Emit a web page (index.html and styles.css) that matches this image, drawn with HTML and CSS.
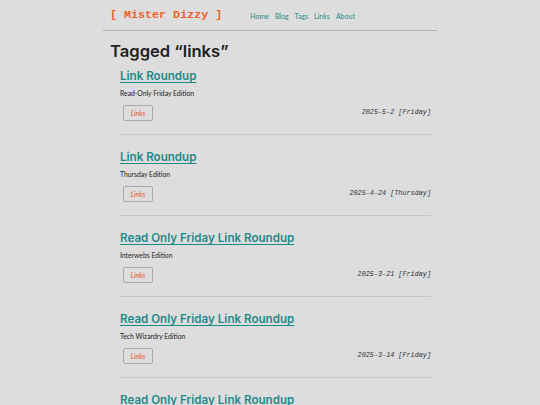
FILE: index.html
```html
<!DOCTYPE html>
<html>
<head>
<meta charset="utf-8">
<link rel="stylesheet" href="styles.css">
</head>
<body>
<div class="wrap">
  <header class="site-header">
    <a class="logo" href="#">[ Mister Dizzy ]</a>
    <nav class="nav">
      <a href="#">Home</a>
      <a href="#">Blog</a>
      <a href="#">Tags</a>
      <a href="#">Links</a>
      <a href="#">About</a>
    </nav>
  </header>
  <h1 class="page-title">Tagged “links”</h1>
  <div class="posts">
    <article class="post">
      <h2 class="post-title"><a href="#">Link Roundup</a></h2>
      <p class="post-sub">Read-Only Friday Edition</p>
      <div class="post-meta">
        <span class="tag">Links</span>
        <span class="date">2025-5-2 [Friday]</span>
      </div>
    </article>
    <article class="post">
      <h2 class="post-title"><a href="#">Link Roundup</a></h2>
      <p class="post-sub">Thursday Edition</p>
      <div class="post-meta">
        <span class="tag">Links</span>
        <span class="date">2025-4-24 [Thursday]</span>
      </div>
    </article>
    <article class="post">
      <h2 class="post-title"><a href="#">Read Only Friday Link Roundup</a></h2>
      <p class="post-sub">Interwebs Edition</p>
      <div class="post-meta">
        <span class="tag">Links</span>
        <span class="date">2025-3-21 [Friday]</span>
      </div>
    </article>
    <article class="post">
      <h2 class="post-title"><a href="#">Read Only Friday Link Roundup</a></h2>
      <p class="post-sub">Tech Wizardry Edition</p>
      <div class="post-meta">
        <span class="tag">Links</span>
        <span class="date">2025-3-14 [Friday]</span>
      </div>
    </article>
    <article class="post">
      <h2 class="post-title"><a href="#">Read Only Friday Link Roundup</a></h2>
      <p class="post-sub">Weekend Edition</p>
      <div class="post-meta">
        <span class="tag">Links</span>
        <span class="date">2025-3-7 [Friday]</span>
      </div>
    </article>
  </div>
</div>
</body>
</html>
```
FILE: styles.css
```css
html, body {
  margin: 0;
  padding: 0;
  background: #dddddd;
}
body {
  font-family: "Lato", "Inter", sans-serif;
  color: #222;
}
.wrap {
  width: 334px;
  margin: 0 auto;
}
.site-header {
  display: flex;
  align-items: center;
  height: 30px;
  padding-left: 7px;
  gap: 28px;
  border-bottom: 1px solid #b4b4b4;
}
.logo {
  font-family: "Liberation Mono", monospace;
  font-weight: bold;
  font-size: 11.7px;
  color: #ee5f28;
  text-decoration: none;
  white-space: pre;
}
.nav {
  display: flex;
  gap: 6px;
  font-size: 7px;
  padding-top: 1px;
}
.nav a {
  color: #2a8a8a;
  text-decoration: none;
}
.page-title {
  font-family: "Inter", sans-serif;
  font-weight: 600;
  font-size: 16.6px;
  line-height: 24px;
  margin: 8px 0 0 7px;
  color: #222;
}
.posts {
  padding: 4px 6px 0 17px;
}
.post {
  padding-bottom: 13px;
  margin-bottom: 13px;
  border-bottom: 1px solid #c6c6c6;
}
.post-title {
  margin: 0;
  font-family: "Inter", sans-serif;
  font-weight: 600;
  font-size: 11.6px;
  line-height: 18px;
}
.post-title a {
  color: #1f8a8a;
  text-decoration: underline;
  text-underline-offset: 2px;
}
.post-sub {
  margin: 3px 0 0;
  font-size: 6.8px;
  line-height: 10px;
  color: #222;
}
.post-meta {
  display: flex;
  justify-content: space-between;
  align-items: flex-start;
  margin-top: 7px;
}
.tag {
  display: inline-flex;
  align-items: center;
  justify-content: center;
  width: 28px;
  height: 14px;
  margin-left: 3px;
  border: 1px solid #a8a8a8;
  border-radius: 2px;
  font-size: 7px;
  font-style: italic;
  color: #e8572a;
}
.date {
  font-family: "Liberation Mono", monospace;
  font-style: italic;
  font-size: 6.8px;
  line-height: 8px;
  margin-top: 3px;
  color: #333;
}
```
